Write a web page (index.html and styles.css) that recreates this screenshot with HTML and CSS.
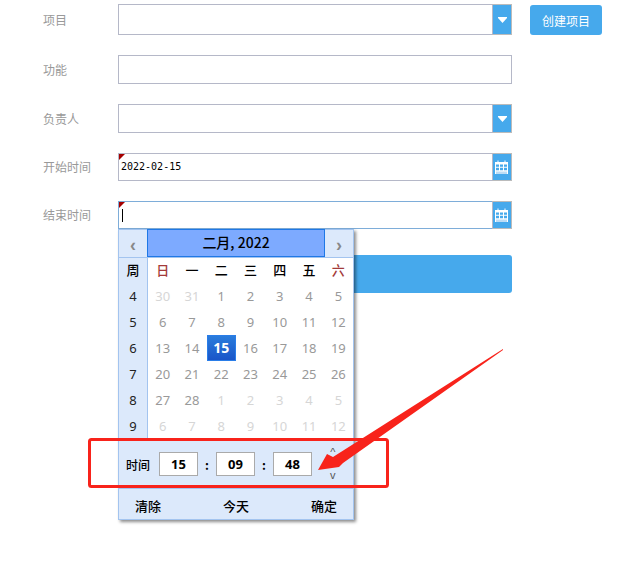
FILE: index.html
```html
<!DOCTYPE html>
<html>
<head>
    <title>创建任务</title>
    <link rel="stylesheet" href="styles.css">
</head>
<body>
    <form class="task-form">
        <div class="row row-first">
            <span class="row-label">项目</span>
            <div class="field">
                <span class="field-text"></span>
                <span class="trigger"><svg class="icon-down" viewBox="0 0 9 6"><path d="M0 0H9V1L4.5 6L0 1Z"/></svg></span>
            </div>
            <button type="button" class="create-btn">创建项目</button>
        </div>

        <div class="row row-mid">
            <span class="row-label">功能</span>
            <div class="field"><span class="field-text"></span></div>
        </div>

        <div class="row row-mid">
            <span class="row-label">负责人</span>
            <div class="field">
                <span class="field-text"></span>
                <span class="trigger"><svg class="icon-down" viewBox="0 0 9 6"><path d="M0 0H9V1L4.5 6L0 1Z"/></svg></span>
            </div>
        </div>

        <div class="row row-date">
            <span class="row-label">开始时间</span>
            <div class="field">
                <i class="required-mark"></i>
                <span class="field-text date-text">2022-02-15</span>
                <span class="trigger">
                    <svg class="icon-cal" viewBox="0 0 13 14"><path fill="#fff" d="M0 2H2.5V0.5H3.5V2H9.5V0.5H10.5V2H13V14H0Z"/><path fill="#46a9ec" d="M1 4.5H4V6.8H1ZM5 4.5H8V6.8H5ZM9 4.5H12V6.8H9ZM1 7.8H4V10.2H1ZM5 7.8H8V10.2H5ZM9 7.8H12V10.2H9Z"/><path fill="#bcdcf5" d="M1 11.5H12V14H1Z"/></svg>
                </span>
            </div>
        </div>

        <div class="row row-date">
            <span class="row-label">结束时间</span>
            <div class="field field-focus">
                <i class="required-mark"></i>
                <span class="caret"></span>
                <span class="field-text"></span>
                <span class="trigger">
                    <svg class="icon-cal" viewBox="0 0 13 14"><path fill="#fff" d="M0 2H2.5V0.5H3.5V2H9.5V0.5H10.5V2H13V14H0Z"/><path fill="#46a9ec" d="M1 4.5H4V6.8H1ZM5 4.5H8V6.8H5ZM9 4.5H12V6.8H9ZM1 7.8H4V10.2H1ZM5 7.8H8V10.2H5ZM9 7.8H12V10.2H9Z"/><path fill="#bcdcf5" d="M1 11.5H12V14H1Z"/></svg>
                </span>
            </div>
        </div>

        <div class="row row-submit">
            <button type="button" class="submit-btn"></button>
        </div>
    </form>

    <div class="calendar">
        <div class="cal-head">
            <span class="cal-nav">‹</span>
            <span class="cal-title">二月, 2022</span>
            <span class="cal-nav">›</span>
        </div>
        <div class="cal-grid">
            <b class="wk wk-top">周</b><b class="dow red">日</b><b class="dow">一</b><b class="dow">二</b><b class="dow">三</b><b class="dow">四</b><b class="dow">五</b><b class="dow red">六</b>
            <span class="wk">4</span><span class="off">30</span><span class="off">31</span><span>1</span><span>2</span><span>3</span><span>4</span><span>5</span>
            <span class="wk">5</span><span>6</span><span>7</span><span>8</span><span>9</span><span>10</span><span>11</span><span>12</span>
            <span class="wk">6</span><span>13</span><span>14</span><span class="today">15</span><span>16</span><span>17</span><span>18</span><span>19</span>
            <span class="wk">7</span><span>20</span><span>21</span><span>22</span><span>23</span><span>24</span><span>25</span><span>26</span>
            <span class="wk">8</span><span>27</span><span>28</span><span class="off">1</span><span class="off">2</span><span class="off">3</span><span class="off">4</span><span class="off">5</span>
            <span class="wk">9</span><span class="off">6</span><span class="off">7</span><span class="off">8</span><span class="off">9</span><span class="off">10</span><span class="off">11</span><span class="off">12</span>
        </div>
        <div class="cal-time">
            <span class="time-label">时间</span>
            <span class="time-box">15</span>
            <span class="time-sep">:</span>
            <span class="time-box">09</span>
            <span class="time-sep">:</span>
            <span class="time-box">48</span>
            <span class="time-spin"><span>^</span><span>v</span></span>
        </div>
        <div class="cal-foot">
            <span>清除</span>
            <span>今天</span>
            <span>确定</span>
        </div>
    </div>

    <!-- red markup drawn on top of the screenshot -->
    <svg class="markup" viewBox="0 0 633 587">
        <rect x="89.5" y="439.5" width="298" height="47" rx="2" fill="none" stroke="#f8231b" stroke-width="3"/>
        <path fill="#f8231b" d="M503 349L333 457L327 454L318 470L339 467L343 463L503 350Z"/>
    </svg>
</body>
</html>
```
FILE: styles.css
```css
html, body {
    height: 100%;
}

body {
    position: relative;
    margin: 0;
    background: #fff;
    font-family: "Noto Sans CJK SC", "Noto Sans", sans-serif;
    font-size: 12px;
}

.task-form {
    padding: 4px 0 0 43px;
}

.row {
    display: flex;
    align-items: center;
}

.row-first {
    height: 31px;
}

.row-mid {
    height: 29px;
    margin-top: 20px;
}

.row-date {
    height: 28px;
    margin-top: 20px;
}

.row-submit {
    height: 38px;
    margin-top: 26px;
    padding-left: 75px;
}

.row-label {
    width: 75px;
    color: #999;
    font-size: 12px;
    line-height: 14px;
}

.field {
    position: relative;
    display: flex;
    box-sizing: border-box;
    width: 394px;
    height: 100%;
    border: 1px solid #b5b8c8;
    background: #fff;
}

.field-focus {
    border-color: #7eadd9;
}

.field-text {
    flex: 1;
    padding-left: 2px;
    line-height: 26px;
}

.date-text {
    font-family: "DejaVu Sans Mono", monospace;
    font-size: 10px;
    color: #000;
}

.caret {
    width: 1px;
    height: 13px;
    margin: 7px 0 0 3px;
    background: #000;
}

.required-mark {
    position: absolute;
    top: 0;
    left: 0;
    border-top: 6px solid #a50000;
    border-right: 6px solid transparent;
}

.trigger {
    display: flex;
    align-items: center;
    justify-content: center;
    box-sizing: border-box;
    width: 20px;
    margin: -1px -1px -1px 0;
    border: 1px solid #bbb;
    border-left-color: #b5b8c8;
    background: #46a9ec;
}

.icon-down {
    width: 9px;
    height: 6px;
    fill: #fff;
}

.icon-cal {
    width: 13px;
    height: 14px;
    margin-right: 1px;
}

.create-btn {
    width: 72px;
    height: 30px;
    margin: 1px 0 0 18px;
    padding: 0;
    border: none;
    border-radius: 3px;
    background: #46a9ec;
    color: #fff;
    font: 12px "Noto Sans CJK SC", sans-serif;
}

.submit-btn {
    width: 394px;
    height: 38px;
    border: none;
    border-radius: 3px;
    background: #46a9ec;
}

/* date picker */
.calendar {
    position: absolute;
    top: 229px;
    left: 118px;
    z-index: 5;
    box-sizing: border-box;
    width: 236px;
    border: 1px solid #a3c4ef;
    background: #dce9fb;
    box-shadow: 2px 2px 3px rgba(0, 0, 0, 0.45);
}

.cal-head {
    display: flex;
    box-sizing: border-box;
    height: 28px;
    border-bottom: 1px solid #a3c4ef;
}

.cal-nav {
    width: 28px;
    color: #888;
    font: bold 18px/30px "Liberation Sans", sans-serif;
    text-align: center;
}

.cal-title {
    flex: 1;
    margin-top: -1px;
    border: 1px solid #1f78e6;
    background: #7daaff;
    color: #000;
    font-size: 14px;
    font-weight: 500;
    line-height: 25px;
    text-align: center;
}

.cal-grid {
    display: grid;
    grid-template-columns: 29px repeat(7, 1fr);
    grid-template-rows: 25px repeat(6, 1fr);
    height: 182px;
    background: #fff;
    color: #999;
    font-family: "Noto Sans", sans-serif;
    font-size: 13px;
}

.cal-grid > * {
    display: flex;
    align-items: center;
    justify-content: center;
    padding-bottom: 1px;
}

.cal-grid .wk {
    border-right: 1px solid #a3c4ef;
    background: #dce9fb;
    color: #222;
}

.cal-grid .wk-top {
    padding-bottom: 3px;
    color: #000;
    font-family: "Noto Sans CJK SC", sans-serif;
    font-weight: 500;
}

.cal-grid .dow {
    padding-bottom: 3px;
    color: #000;
    font-family: "Noto Sans CJK SC", sans-serif;
    font-weight: 500;
}

.cal-grid .red {
    color: #a33a3a;
}

.cal-grid .off {
    color: #d6d6d6;
}

.cal-grid .today {
    border: 1px solid #2a7de8;
    background: linear-gradient(#2a7cdc, #1a55c8);
    color: #fff;
    font-weight: bold;
    font-size: 14px;
}

.cal-time {
    display: flex;
    align-items: center;
    height: 48px;
    padding-left: 7px;
    border-bottom: 1px solid #a3c4ef;
    color: #000;
}

.time-label {
    width: 33px;
    font-weight: 500;
}

.time-box {
    box-sizing: border-box;
    width: 39px;
    height: 24px;
    border: 1px solid #aaa;
    background: #fff;
    font: bold 13px/22px "Noto Sans", sans-serif;
    text-align: center;
}

.time-sep {
    width: 18px;
    font-weight: bold;
    text-align: center;
}

.time-spin {
    display: flex;
    flex-direction: column;
    align-items: center;
    gap: 11px;
    margin: 0 0 1px 18px;
    color: #555;
    font: 11px/12px "Liberation Sans", sans-serif;
}

.cal-foot {
    display: flex;
    justify-content: space-between;
    align-items: center;
    height: 30px;
    padding: 2px 16px 0;
    box-sizing: border-box;
    color: #000;
    font-size: 13px;
    font-weight: 500;
}

.markup {
    position: absolute;
    top: 0;
    left: 0;
    z-index: 10;
    width: 633px;
    height: 587px;
}
```
